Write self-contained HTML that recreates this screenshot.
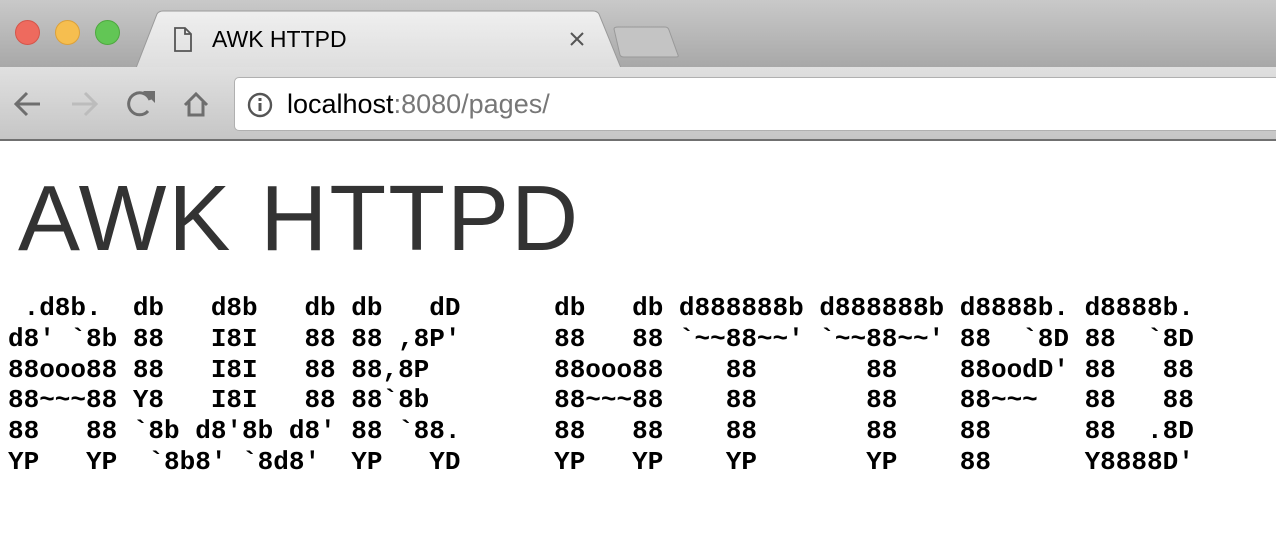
<!DOCTYPE html>
<html><head><meta charset="utf-8"><style>
*{margin:0;padding:0;box-sizing:border-box}
body{width:1276px;height:560px;overflow:hidden;background:#fff;position:relative;font-family:"Liberation Sans",sans-serif}
.tabbar{position:absolute;left:0;top:0;width:1276px;height:67px;background:linear-gradient(#c9c9c9,#a8a8a8)}
.toolbar{position:absolute;left:0;top:67px;width:1276px;height:74px;background:linear-gradient(#e0e0e0,#c6c6c6);border-bottom:2px solid #707070}
.dot{position:absolute;top:20px;width:25px;height:25px;border-radius:50%}
.addr{position:absolute;left:234px;top:10px;width:1060px;height:54px;background:#fff;border:1px solid #b0b0b0;border-radius:5px}
.url{position:absolute;left:52px;top:11px;font-size:27px;color:#000}
.url span{color:#777}
h1{position:absolute;left:18px;top:172px;font-weight:normal;font-size:93px;color:#333;line-height:1;letter-spacing:2px}
pre{position:absolute;left:8px;top:293px;font-family:"Liberation Mono",monospace;font-weight:bold;font-size:26px;line-height:30.8px;color:#000}
</style></head><body>
<div class="tabbar">
<div class="dot" style="left:15px;background:#ee6a5e;border:1px solid #d5554a"></div>
<div class="dot" style="left:55px;background:#f6be4f;border:1px solid #dca13a"></div>
<div class="dot" style="left:95px;background:#62c655;border:1px solid #4ea93f"></div>
<svg style="position:absolute;left:0;top:0" width="700" height="68">
<defs><linearGradient id="g" x1="0" y1="0" x2="0" y2="1"><stop offset="0" stop-color="#efefef"/><stop offset="1" stop-color="#dedede"/></linearGradient></defs>
<path d="M136 68 L157 14 Q159 11 163 11 L593 11 Q597 11 599 14 L621 68 Z" fill="url(#g)" stroke="#9a9a9a"/>
<path d="M614 29 Q614 27 618 27 L665 27 Q668 27 669 30 L678 55 Q679 57 676 57 L624 57 Q621 57 620 55 Z" fill="#c4c4c4" stroke="#999"/>
<path d="M175 28 h10 l6 6 v17 h-16 z M185 28 v6 h6" fill="none" stroke="#555" stroke-width="1.8"/>
<path d="M571 33 l12 12 M583 33 l-12 12" stroke="#555" stroke-width="2"/>
</svg>
<div style="position:absolute;left:212px;top:26px;font-size:23px;color:#000">AWK HTTPD</div>
</div>
<div class="toolbar">
<svg style="position:absolute;left:0;top:0" width="234" height="74">
<path d="M40 37 H16 M27 26 L16 37 L27 48" fill="none" stroke="#6e6e6e" stroke-width="3"/>
<path d="M72 37 H96 M85 26 L96 37 L85 48" fill="none" stroke="#bcbcbc" stroke-width="3"/>
<path d="M150 33 A11 11 0 1 0 148 44" fill="none" stroke="#6e6e6e" stroke-width="3"/>
<path d="M143 24 L155 24 L155 36 Z" fill="#6e6e6e"/>
<path d="M185 38 L196 27 L207 38 M189 35 V48 H203 V35" fill="none" stroke="#6e6e6e" stroke-width="3"/>
</svg>
<div class="addr">
<svg style="position:absolute;left:12px;top:14px" width="28" height="28"><circle cx="13" cy="13" r="11" fill="none" stroke="#555" stroke-width="2.4"/><rect x="11.5" y="11" width="3" height="8" fill="#555"/><rect x="11.5" y="6" width="3" height="3" fill="#555"/></svg>
<div class="url">localhost<span>:8080/pages/</span></div>
</div>
</div>
<h1>AWK HTTPD</h1>
<pre> .d8b.  db   d8b   db db   dD      db   db d888888b d888888b d8888b. d8888b.
d8' `8b 88   I8I   88 88 ,8P'      88   88 `~~88~~' `~~88~~' 88  `8D 88  `8D
88ooo88 88   I8I   88 88,8P        88ooo88    88       88    88oodD' 88   88
88~~~88 Y8   I8I   88 88`8b        88~~~88    88       88    88~~~   88   88
88   88 `8b d8'8b d8' 88 `88.      88   88    88       88    88      88  .8D
YP   YP  `8b8' `8d8'  YP   YD      YP   YP    YP       YP    88      Y8888D'</pre>
</body></html>
